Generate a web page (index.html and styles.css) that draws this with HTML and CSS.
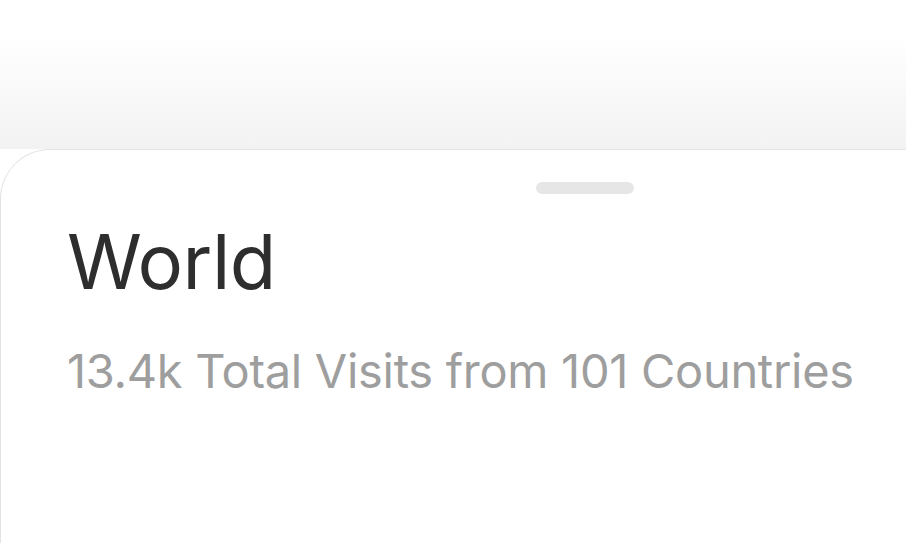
FILE: index.html
```html
<!DOCTYPE html>
<html lang="en">
<head>
    <meta charset="UTF-8">
    <title>World</title>
    <link rel="stylesheet" href="styles.css">
</head>
<body>
    <div class="top"></div>
    <div class="sheet">
        <div class="handle"></div>
        <h1 class="title">World</h1>
        <p class="subtitle">13.4k Total Visits from 101 Countries</p>
    </div>
</body>
</html>
```

FILE: styles.css
```css
html, body {
    margin: 0;
    padding: 0;
    height: 100%;
    overflow: hidden;
}
body {
    font-family: Inter, "Noto Sans", sans-serif;
    background: #ffffff;
}
.top {
    height: 149px;
    background: linear-gradient(to bottom, #ffffff 0%, #ffffff 25%, #f2f2f2 100%);
}
.sheet {
    width: 1170px;
    height: 394px;
    background: #ffffff;
    border: 1px solid #e3e3e3;
    border-bottom: none;
    border-top-left-radius: 50px;
    box-sizing: border-box;
    padding: 32px 0 0 67px;
}
.handle {
    width: 98px;
    height: 12px;
    border-radius: 6px;
    background: #e6e6e6;
    margin: 0 0 0 468px;
}
.title {
    margin: 27px 0 0 -1px;
    font-size: 76px;
    font-weight: 400;
    line-height: 80px;
    color: #2e2e2e;
    letter-spacing: -0.5px;
}
.subtitle {
    margin: 42px 0 0 -1px;
    font-size: 47px;
    line-height: 56px;
    color: #9e9e9e;
    letter-spacing: -0.3px;
}
```
